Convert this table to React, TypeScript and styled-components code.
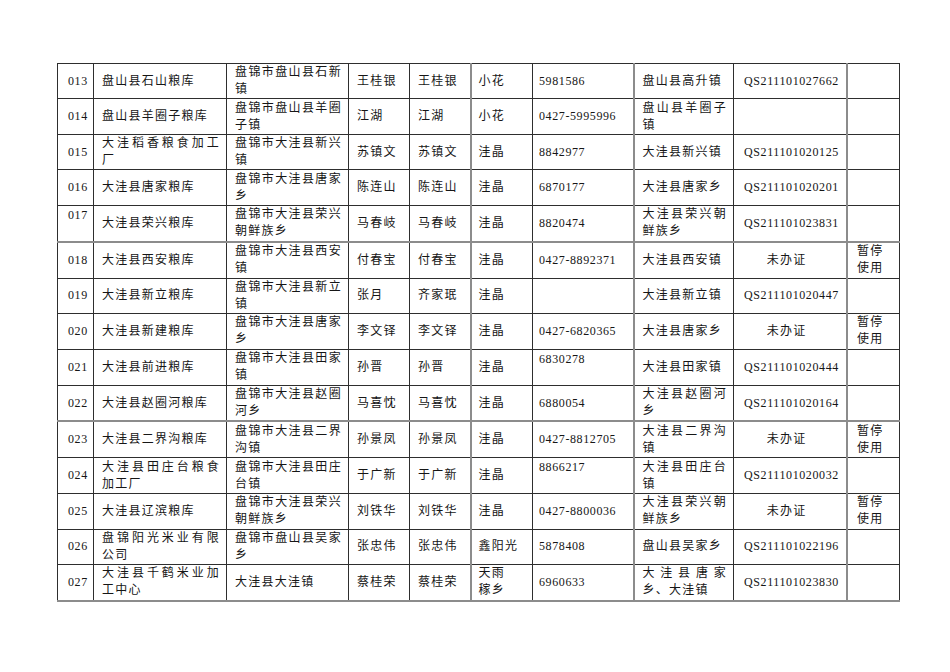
import React from 'react';
import styled, { createGlobalStyle } from 'styled-components';

const GlobalStyle = createGlobalStyle`
  html, body {
    margin: 0;
    padding: 0;
    background: #ffffff;
  }
`;

type Column = {
  key: keyof Row;
  width: number;
  pl: number;
  center?: boolean;
  soft?: boolean;
};

type Row = {
  no: string;
  name: string;
  addr: string;
  legal: string;
  contact: string;
  brand: string;
  phone: string;
  site: string;
  cert: string;
  note: string;
  topNo?: boolean;
  topPhone?: boolean;
  softTop?: boolean;
};

// column config: width, left padding, alignment, faded left rule
const columns: Column[] = [
  { key: 'no', width: 36, pl: 10 },
  { key: 'name', width: 133, pl: 8 },
  { key: 'addr', width: 122, pl: 8 },
  { key: 'legal', width: 61, pl: 8 },
  { key: 'contact', width: 61, pl: 8 },
  { key: 'brand', width: 62, pl: 7, soft: true },
  { key: 'phone', width: 101, pl: 6 },
  { key: 'site', width: 100, pl: 8, soft: true },
  { key: 'cert', width: 113, pl: 10 },
  { key: 'note', width: 53, pl: 0, center: true, soft: true },
];

// "\n" = wrapped line (justified), "|" = hard break
const rows: Row[] = [
  { no: '013', name: '盘山县石山粮库', addr: '盘锦市盘山县石新\n镇', legal: '王桂银', contact: '王桂银', brand: '小花', phone: '5981586', site: '盘山县高升镇', cert: 'QS211101027662', note: '' },
  { no: '014', name: '盘山县羊圈子粮库', addr: '盘锦市盘山县羊圈\n子镇', legal: '江湖', contact: '江湖', brand: '小花', phone: '0427-5995996', site: '盘山县羊圈子\n镇', cert: '', note: '' },
  { no: '015', name: '大洼稻香粮食加工\n厂', addr: '盘锦市大洼县新兴\n镇', legal: '苏镇文', contact: '苏镇文', brand: '洼晶', phone: '8842977', site: '大洼县新兴镇', cert: 'QS211101020125', note: '' },
  { no: '016', name: '大洼县唐家粮库', addr: '盘锦市大洼县唐家\n乡', legal: '陈连山', contact: '陈连山', brand: '洼晶', phone: '6870177', site: '大洼县唐家乡', cert: 'QS211101020201', note: '' },
  { no: '017', name: '大洼县荣兴粮库', addr: '盘锦市大洼县荣兴\n朝鲜族乡', legal: '马春岐', contact: '马春岐', brand: '洼晶', phone: '8820474', site: '大洼县荣兴朝\n鲜族乡', cert: 'QS211101023831', note: '', topNo: true },
  { no: '018', name: '大洼县西安粮库', addr: '盘锦市大洼县西安\n镇', legal: '付春宝', contact: '付春宝', brand: '洼晶', phone: '0427-8892371', site: '大洼县西安镇', cert: '未办证', note: '暂停|使用', softTop: true },
  { no: '019', name: '大洼县新立粮库', addr: '盘锦市大洼县新立\n镇', legal: '张月', contact: '齐家珉', brand: '洼晶', phone: '', site: '大洼县新立镇', cert: 'QS211101020447', note: '' },
  { no: '020', name: '大洼县新建粮库', addr: '盘锦市大洼县唐家\n乡', legal: '李文铎', contact: '李文铎', brand: '洼晶', phone: '0427-6820365', site: '大洼县唐家乡', cert: '未办证', note: '暂停|使用' },
  { no: '021', name: '大洼县前进粮库', addr: '盘锦市大洼县田家\n镇', legal: '孙晋', contact: '孙晋', brand: '洼晶', phone: '6830278', site: '大洼县田家镇', cert: 'QS211101020444', note: '', topPhone: true },
  { no: '022', name: '大洼县赵圈河粮库', addr: '盘锦市大洼县赵圈\n河乡', legal: '马喜忱', contact: '马喜忱', brand: '洼晶', phone: '6880054', site: '大洼县赵圈河\n乡', cert: 'QS211101020164', note: '' },
  { no: '023', name: '大洼县二界沟粮库', addr: '盘锦市大洼县二界\n沟镇', legal: '孙景凤', contact: '孙景凤', brand: '洼晶', phone: '0427-8812705', site: '大洼县二界沟\n镇', cert: '未办证', note: '暂停|使用', softTop: true },
  { no: '024', name: '大洼县田庄台粮食\n加工厂', addr: '盘锦市大洼县田庄\n台镇', legal: '于广新', contact: '于广新', brand: '洼晶', phone: '8866217', site: '大洼县田庄台\n镇', cert: 'QS211101020032', note: '', topPhone: true },
  { no: '025', name: '大洼县辽滨粮库', addr: '盘锦市大洼县荣兴\n朝鲜族乡', legal: '刘铁华', contact: '刘铁华', brand: '洼晶', phone: '0427-8800036', site: '大洼县荣兴朝\n鲜族乡', cert: '未办证', note: '暂停|使用' },
  { no: '026', name: '盘锦阳光米业有限\n公司', addr: '盘锦市盘山县吴家\n乡', legal: '张忠伟', contact: '张忠伟', brand: '鑫阳光', phone: '5878408', site: '盘山县吴家乡', cert: 'QS211101022196', note: '' },
  { no: '027', name: '大洼县千鹤米业加\n工中心', addr: '大洼县大洼镇', legal: '蔡桂荣', contact: '蔡桂荣', brand: '天雨|稼乡', phone: '6960633', site: '大洼县唐家\n乡、大洼镇', cert: 'QS211101023830', note: '' },
];

const Page = styled.div`
  padding: 63px 0 40px 57px;
`;

const Table = styled.table`
  border-collapse: collapse;
  table-layout: fixed;
  width: 842px;
  font-family: "Liberation Serif", "Noto Sans CJK SC", serif;
  font-size: 12px;
  color: #161616;
`;

const Tr = styled.tr<{ $softTop?: boolean; $last?: boolean }>`
  & > td {
    border-top: ${(p) => (p.$softTop ? '2px solid #8c8c8c' : '1px solid #2e2e2e')};
    border-bottom: ${(p) => (p.$last ? '2px solid #8c8c8c' : '1px solid #2e2e2e')};
  }
`;

const Cell = styled.td<{ $pl: number; $center?: boolean; $top?: boolean; $soft?: boolean }>`
  height: 34.45px;
  padding: ${(p) => (p.$top ? '1px' : '0')} 6px 0 ${(p) => p.$pl}px;
  border-left: ${(p) => (p.$soft ? '2px solid #8c8c8c' : '1px solid #2e2e2e')};
  border-right: 1px solid #2e2e2e;
  vertical-align: ${(p) => (p.$top ? 'top' : 'middle')};
  text-align: ${(p) => (p.$center ? 'center' : 'left')};
  line-height: 17px;
  overflow: hidden;
`;

const Line = styled.span<{ $justify?: boolean; $num?: boolean }>`
  display: block;
  white-space: nowrap;
  letter-spacing: ${(p) => (p.$num ? '0.6px' : '1.25px')};
  text-align: ${(p) => (p.$justify ? 'justify' : 'inherit')};
  text-align-last: ${(p) => (p.$justify ? 'justify' : 'auto')};
`;

const isAscii = (s: string) => /^[\x00-\x7f]*$/.test(s);

const CellText = ({ text, center }: { text: string; center?: boolean }) => {
  const hard = text.includes('|');
  const lines = text.split(hard ? '|' : '\n');
  return (
    <>
      {lines.map((ln, i) => (
        <Line
          key={i}
          $num={isAscii(ln)}
          $justify={!hard && !center && i < lines.length - 1}
        >
          {ln}
        </Line>
      ))}
    </>
  );
};

const App = () => {
  return (
    <Page>
      <GlobalStyle />
      <Table>
        <colgroup>
          {columns.map((c) => (
            <col key={c.key} style={{ width: c.width }} />
          ))}
        </colgroup>
        <tbody>
          {rows.map((r, ri) => (
            <Tr key={r.no} $softTop={r.softTop} $last={ri === rows.length - 1}>
              {columns.map((c) => {
                const text = String(r[c.key] ?? '');
                const center = c.center || text === '未办证';
                const top =
                  (c.key === 'no' && r.topNo) || (c.key === 'phone' && r.topPhone);
                return (
                  <Cell
                    key={c.key}
                    $pl={center ? 0 : c.pl}
                    $center={center}
                    $top={!!top}
                    $soft={c.soft}
                  >
                    {text && <CellText text={text} center={center} />}
                  </Cell>
                );
              })}
            </Tr>
          ))}
        </tbody>
      </Table>
    </Page>
  );
};

export default App;
